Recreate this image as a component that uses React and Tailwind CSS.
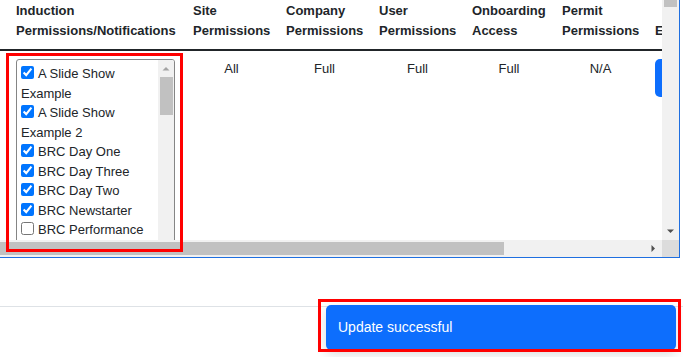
import React from "react";

const items = [
  { label: "A Slide Show Example", checked: true },
  { label: "A Slide Show Example 2", checked: true },
  { label: "BRC Day One", checked: true },
  { label: "BRC Day Three", checked: true },
  { label: "BRC Day Two", checked: true },
  { label: "BRC Newstarter", checked: true },
  { label: "BRC Performance", checked: false },
  { label: "BRC Refresher", checked: false },
  { label: "Contractor Induction", checked: false },
];

const headers = [
  { t: "Induction Permissions/Notifications", cls: "pl-4 pr-2" },
  { t: "Site Permissions", cls: "px-2" },
  { t: "Company Permissions", cls: "px-2" },
  { t: "User Permissions", cls: "px-2" },
  { t: "Onboarding Access", cls: "px-2" },
  { t: "Permit Permissions", cls: "px-2" },
  { t: "Edit", cls: "px-2" },
];

function InductionList() {
  return (
    <div className="flex h-[200px] w-[159px] overflow-hidden rounded-[3px] border border-[#858585] bg-white text-left font-normal">
      <div className="min-w-0 flex-1 overflow-hidden pl-1 pt-1">
        {items.map((it) => (
          <div key={it.label} className="text-[13px] leading-[19.5px] text-[#212529]">
            <input
              type="checkbox"
              defaultChecked={it.checked}
              className="m-0 mr-1 inline-block h-[13px] w-[13px] align-[-1px]"
            />
            {it.label}
          </div>
        ))}
      </div>
      <div className="flex w-[16px] flex-col items-center bg-[#f1f1f1]">
        <svg width="16" height="16" viewBox="0 0 16 16" className="shrink-0">
          <path d="M4.5 10.5 L8 7 L11.5 10.5 Z" fill="#a3a3a3" />
        </svg>
        <div className="mt-px h-[38px] w-[13px] bg-[#c1c1c1]" />
      </div>
    </div>
  );
}

export default function App() {
  return (
    <div
      className="relative h-[357px] w-[683px] overflow-hidden bg-white text-[#212529]"
      style={{ fontFamily: '"Liberation Sans", Arial, sans-serif' }}
    >
      {/* scrolling table frame */}
      <div className="flex h-[258px] w-[680px] flex-col border-b border-r border-[#1f6fe0]">
        <div className="flex min-h-0 flex-1">
          <div className="min-w-0 flex-1 overflow-hidden">
            <table className="w-[757px] table-fixed border-collapse">
              <colgroup>
                <col className="w-[185px]" />
                <col className="w-[93px]" />
                <col className="w-[93px]" />
                <col className="w-[93px]" />
                <col className="w-[90px]" />
                <col className="w-[93px]" />
                <col className="w-[110px]" />
              </colgroup>
              <thead>
                <tr className="border-b-2 border-[#212529]">
                  {headers.map((h) => (
                    <th
                      key={h.t}
                      className={`${h.cls} pb-[9px] pt-px text-left align-bottom text-[13px] font-bold leading-[19.5px]`}
                    >
                      {h.t}
                    </th>
                  ))}
                </tr>
              </thead>
              <tbody>
                <tr className="text-[13px] leading-[19.5px]">
                  <td className="pl-4 pr-2 pt-2 align-top">
                    <InductionList />
                  </td>
                  <td className="px-2 pt-2 text-center align-top">All</td>
                  <td className="px-2 pt-2 text-center align-top">Full</td>
                  <td className="px-2 pt-2 text-center align-top">Full</td>
                  <td className="px-2 pt-2 text-center align-top">Full</td>
                  <td className="px-2 pt-2 text-center align-top">N/A</td>
                  <td className="px-2 pt-2 align-top">
                    <button className="h-[38px] rounded-[5px] bg-[#0d6efd] px-3 text-[16px] text-white">
                      Edit
                    </button>
                  </td>
                </tr>
              </tbody>
            </table>
          </div>
          {/* vertical scrollbar */}
          <div className="flex w-[17px] flex-col items-center bg-[#f1f1f1]">
            <div className="h-[7px] w-[13px] bg-[#c1c1c1]" />
            <div className="flex-1" />
            <svg width="17" height="17" viewBox="0 0 17 17" className="shrink-0">
              <path d="M5 6.5 L12 6.5 L8.5 10 Z" fill="#505050" />
            </svg>
          </div>
        </div>
        {/* horizontal scrollbar */}
        <div className="flex h-[17px]">
          <div className="flex flex-1 items-center bg-[#f1f1f1]">
            <div className="h-[13px] w-[504px] bg-[#c1c1c1]" />
            <div className="flex-1" />
            <svg width="17" height="17" viewBox="0 0 17 17" className="shrink-0">
              <path d="M6.5 5 L6.5 12 L10 8.5 Z" fill="#505050" />
            </svg>
          </div>
          <div className="w-[17px] bg-[#dcdcdc]" />
        </div>
      </div>

      {/* footer divider */}
      <div className="mt-[48px] border-t border-[#dee2e6]" />

      {/* toast */}
      <div className="absolute left-[326px] top-[305px] flex h-[45px] w-[350px] items-center rounded-[5px] bg-[#0d6efd] pl-3 text-[14px] text-white shadow-[0_4px_12px_rgba(0,0,0,0.15)]">
        Update successful
      </div>

      {/* red annotation boxes */}
      <div className="pointer-events-none absolute left-[6px] top-[53px] h-[199px] w-[177px] border-[3px] border-[#ff0000]" />
      <div className="pointer-events-none absolute left-[318px] top-[299px] h-[53px] w-[363px] border-[3px] border-[#ff0000]" />
    </div>
  );
}
